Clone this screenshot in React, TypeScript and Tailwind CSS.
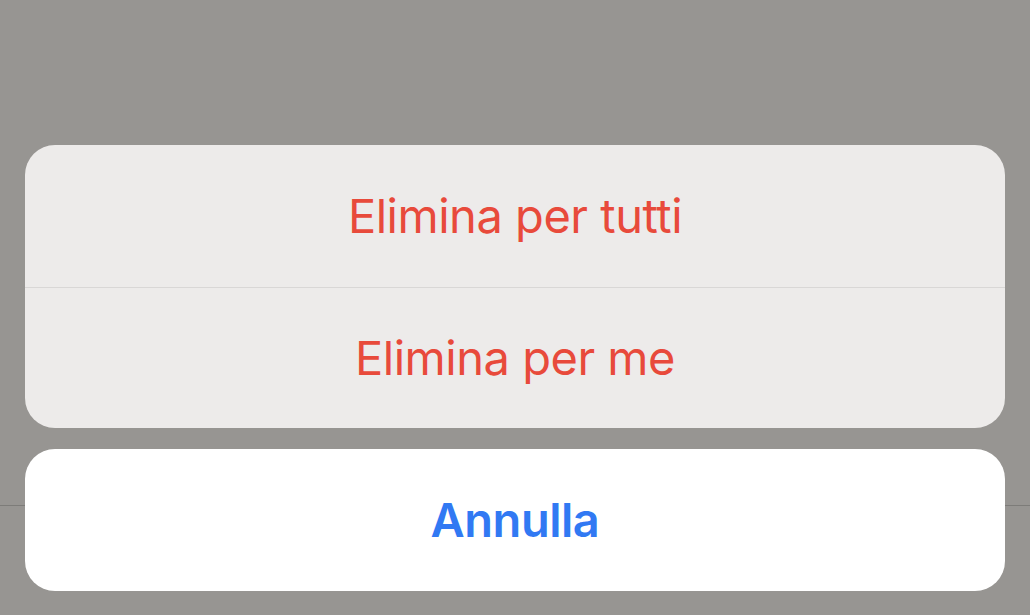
export default function App() {
  return (
    <div
      className="relative flex h-[615px] w-full flex-col overflow-hidden bg-[#979592] px-[25px] pt-[145px]"
      style={{ fontFamily: 'Inter, "Noto Sans", sans-serif' }}
    >
      {/* faint hairline of the screen behind the sheet */}
      <div className="absolute left-0 right-0 top-[505px] h-px bg-[#7d7c79]" />

      <div className="relative overflow-hidden rounded-[30px] bg-[#edebea]">
        <button className="flex h-[142px] w-full items-center justify-center text-[47px] font-normal tracking-[-0.01em] text-[#e84a3b]">
          Elimina per tutti
        </button>
        <div className="h-px bg-[#d9d7d6]" />
        <button className="flex h-[140px] w-full items-center justify-center text-[47px] font-normal tracking-[-0.01em] text-[#e84a3b]">
          Elimina per me
        </button>
      </div>

      <button className="relative mt-[21px] flex h-[142px] w-full items-center justify-center rounded-[30px] bg-white text-[47px] font-semibold tracking-[-0.01em] text-[#3179f3]">
        Annulla
      </button>
    </div>
  );
}
